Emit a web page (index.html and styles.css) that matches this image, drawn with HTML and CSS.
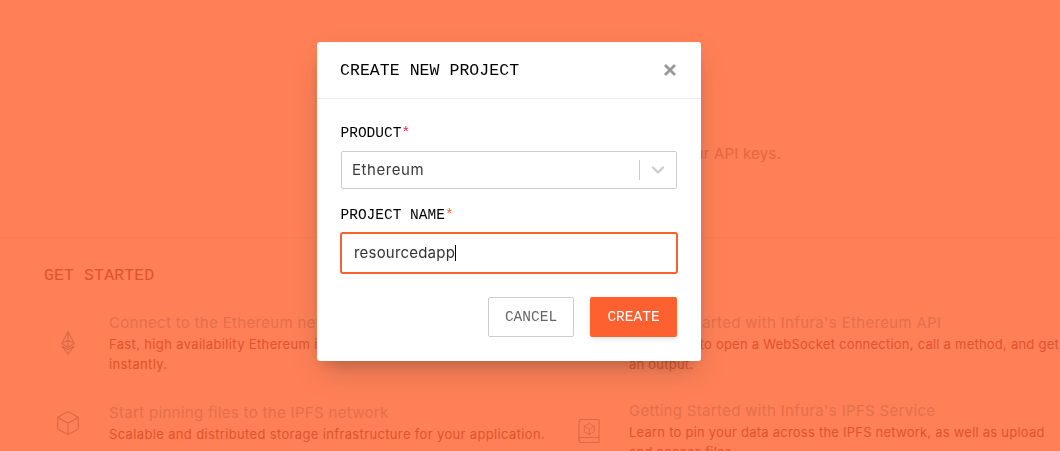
FILE: index.html
```html
<!DOCTYPE html>
<html lang="en">
<head>
<meta charset="utf-8">
<title>Create new project</title>
<link rel="stylesheet" href="styles.css">
</head>
<body>
<main class="page">
  <header class="intro"><p class="intro-text">Create a project to get your API keys.</p></header>
  <section class="started">
    <h2 class="started-title">GET STARTED</h2>
    <div class="columns">
      <div class="column">
        <article class="guide">
          <svg class="icon" viewBox="0 0 28 28"><path d="M14 2.500 20.200 14.500 14 18.500 7.800 14.500ZM7.800 14.500 14 11.200 20.200 14.500M14 2.500V18.500M7.800 17 14 25 20.200 17 14 20.800Z"/></svg>
          <div><h3 class="guide-title">Connect to the Ethereum network</h3><p class="guide-text"><span class="line">Fast, high availability Ethereum infrastructure</span><span class="line">instantly.</span></p></div>
        </article>
        <article class="guide">
          <svg class="icon icon-cube" viewBox="0 0 28 28"><path d="M14 2.500 24.300 8.300V20L14 25.500 3.700 20V8.300ZM3.700 8.300 14 14.200 24.300 8.300M14 14.200V25.500"/></svg>
          <div><h3 class="guide-title">Start pinning files to the IPFS network</h3><p class="guide-text">Scalable and distributed storage infrastructure for your application.</p></div>
        </article>
      </div>
      <div class="column column-right">
        <article class="guide">
          <svg class="icon" viewBox="0 0 28 28"><path d="M24 2.500H6.500Q4 2.500 4 5V23Q4 25.500 6.500 25.500H24ZM4 22Q4 20 7 20H24"/></svg>
          <div><h3 class="guide-title">Getting Started with Infura's Ethereum API</h3><p class="guide-text"><span class="line">Learn how to open a WebSocket connection, call a method, and get</span><span class="line">an output.</span></p></div>
        </article>
        <article class="guide">
          <svg class="icon" viewBox="0 0 28 28"><path d="M24 2.500H6.500Q4 2.500 4 5V23Q4 25.500 6.500 25.500H24V24M4 23Q4 20.500 6.500 20.500H24V2.500M24 21V24"/><path class="thin" d="M14.300 6.500 19.300 9.200V14.800L14.300 17.500 9.300 14.800V9.200ZM9.300 9.200 14.300 12 19.300 9.200M14.300 12V17.500"/></svg>
          <div><h3 class="guide-title">Getting Started with Infura's IPFS Service</h3><p class="guide-text"><span class="line">Learn to pin your data across the IPFS network, as well as upload</span><span class="line">and access files.</span></p></div>
        </article>
      </div>
    </div>
  </section>
</main>
<div class="overlay">
  <form class="modal">
    <header class="modal-head">
      <h1 class="modal-title">CREATE NEW PROJECT</h1>
      <svg class="close" viewBox="0 0 14 14"><path d="M2 2 12 12M12 2 2 12"/></svg>
    </header>
    <div class="modal-body">
      <div class="label">PRODUCT<span class="star-red">*</span></div>
      <div class="select"><span class="select-value">Ethereum</span><i class="divider"></i><svg class="chevron" viewBox="0 0 14 10"><path d="M2 2.500 7 7.500 12 2.500"/></svg></div>
      <div class="label label-name">PROJECT NAME<span class="star-orange">*</span></div>
      <div class="input"><span class="input-value">resourcedapp</span><i class="caret"></i></div>
      <div class="actions"><div class="button cancel">CANCEL</div><div class="button create">CREATE</div></div>
    </div>
  </form>
</div>
</body>
</html>
```
FILE: styles.css
```css
* { box-sizing: border-box; margin: 0; padding: 0; }
body { width: 1060px; height: 451px; overflow: hidden; background: #ff8056; font-family: Inter, "Liberation Sans", sans-serif; }
h1, h2, h3 { font-weight: 400; }
.page { height: 451px; overflow: hidden; }
.intro { height: 238px; padding: 144px 279px 0 0; border-bottom: 1px solid #fb7c53; text-align: right; }
.intro-text { font-size: 15px; line-height: 20px; letter-spacing: .2px; color: #e8663f; }
.started { padding: 28px 0 0 44px; }
.started-title { font: 16.500px/20px "Liberation Mono", monospace; letter-spacing: .12px; color: #e0532c; }
.columns { display: grid; grid-template-columns: 520px 496px; padding-top: 27px; }
.guide { display: grid; grid-template-columns: 65px 1fr; height: 90px; }
.column-right .guide { height: 88px; }
.icon { width: 28px; height: 28px; margin: 16px 0 0 10px; fill: none; stroke: #dc6a46; stroke-width: 1.200; }
.icon-cube { margin-top: 6px; }
.column-right .icon { margin-top: 16px; margin-left: 11px; }
.thin { stroke-width: .9; }
.guide-title { font-size: 15px; line-height: 20px; letter-spacing: .32px; color: #e3704b; white-space: nowrap; }
.guide-text { padding-top: 1px; font-size: 13px; line-height: 20px; letter-spacing: .35px; color: #e0532c; white-space: nowrap; }
.column-right .guide-text { letter-spacing: .23px; }
.line { display: block; }
.overlay { position: fixed; inset: 0; padding: 42px 0 0 317px; }
.modal { width: 384px; height: 319px; background: #fff; border-radius: 3px; box-shadow: 0 13px 27px -5px rgba(50, 50, 50, .25), 0 8px 16px -8px rgba(0, 0, 0, .2); }
.modal-head { display: flex; justify-content: space-between; align-items: center; height: 57px; padding: 0 24px 0 23px; border-bottom: 1px solid #eaeaea; }
.modal-title { padding-top: 2px; font: 16.500px/20px "Liberation Mono", monospace; letter-spacing: .05px; color: #000; }
.close { width: 14px; height: 14px; fill: none; stroke: #999; stroke-width: 2.800; }
.modal-body { padding: 24px 23px 0; }
.label { padding-left: .5px; font: 14.500px/20px "Liberation Mono", monospace; color: #000; }
.star-red { color: #ff1744; }
.star-orange { color: #ff6030; }
.select { display: flex; align-items: center; height: 38px; margin: 8px 1px 0; padding: 0 11px 0 10px; border: 1px solid #ccc; border-radius: 2px; color: #3a3a3a; }
.select-value { flex: 1; padding-bottom: 2px; font-size: 15px; letter-spacing: .55px; }
.divider { width: 1px; height: 20px; background: #ccc; }
.chevron { width: 14px; height: 10px; margin-left: 11px; fill: none; stroke: #ccc; stroke-width: 2.200; stroke-linecap: round; }
.label-name { margin-top: 16px; }
.input { display: flex; align-items: center; height: 42px; margin-top: 7px; padding-left: 12px; border: 2px solid #ff6030; border-radius: 3px; font-size: 15px; letter-spacing: .2px; color: #333; }
.input-value { padding-bottom: 2px; }
.caret { width: 1px; height: 16px; background: #000; }
.actions { display: flex; justify-content: flex-end; gap: 16px; padding: 23px 1px 0 0; }
.button { display: flex; align-items: center; justify-content: center; height: 40px; border-radius: 2px; font: 14.500px/20px "Liberation Mono", monospace; }
.cancel { width: 86px; border: 1px solid #ccc; color: #666; }
.create { width: 87px; background: #ff6030; color: #fff; box-shadow: 0 2px 5px rgba(0, 0, 0, .1); }
```
